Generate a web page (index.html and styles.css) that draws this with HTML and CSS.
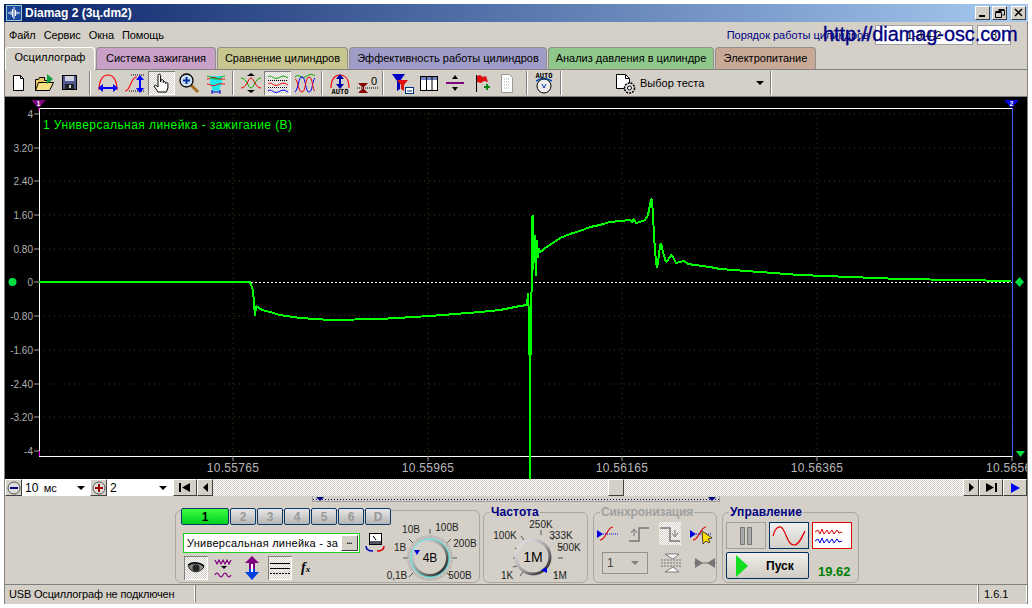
FILE: index.html

```html
<!DOCTYPE html>
<html lang="ru">
<head>
  <meta charset="UTF-8">
  <title>Diamag 2</title>
  <link rel="stylesheet" href="styles.css">
</head>
<body>
<div class="window">
  <div class="titlebar">
    <svg class="app-icon" width="16" height="16" viewBox="0 0 16 16"><rect width="16" height="16" fill="#1c4aa0"/><rect x=".5" y=".5" width="15" height="15" fill="none" stroke="#9cc"/><path d="M2 8h2M5 6v4M6.500 4v8M8 2v12M9.500 5v6M11 6.500v3M12 8h2" fill="none" stroke="#fff"/></svg>
    <span class="title-text">Diamag 2 (3ц.dm2)</span>
    <div class="win-btns">
      <button class="win-btn"><svg width="10" height="10"><rect x="1" y="7" width="6" height="2"/></svg></button>
      <button class="win-btn"><svg width="10" height="10"><path d="M3.500 2.500h6v4.500h-2M3.500 1.500h6M.5 4.500h6v5h-6zM.5 3.500h6" fill="none" stroke="#000"/></svg></button>
      <button class="win-btn close"><svg width="10" height="10"><path d="M1 1l7 7M8 1l-7 7" stroke="#000" stroke-width="1.500"/></svg></button>
    </div>
  </div>

  <div class="menubar">
    <span>Файл</span><span>Сервис</span><span>Окна</span><span>Помощь</span>
    <span class="order">Порядок работы цилиндров</span>
    <span class="order-box wide">1-3-4-2</span>
    <span class="order-box small">3</span>
    <span class="site-url">http://diamag-osc.com</span>
  </div>

  <div class="tabs">
    <div class="tab active">Осциллограф</div>
    <div class="tab pink">Система зажигания</div>
    <div class="tab olive">Сравнение цилиндров</div>
    <div class="tab violet">Эффективность работы цилиндров</div>
    <div class="tab green">Анализ давления в цилиндре</div>
    <div class="tab brown">Электропитание</div>
  </div>

  <div class="toolbar">
    <div class="tb"><svg width="24" height="24"><path d="M7.500 4.500h7l3 3v12h-10z" fill="#fff" stroke="#000"/><path d="M14.500 4.500v3h3" fill="none" stroke="#000"/></svg></div>
    <div class="tb"><svg width="24" height="24"><path d="M3.500 19.500v-11h3l1-2h5v3h5v2" fill="#e8c860" stroke="#000"/><path d="M3.500 19.500l3-8h15l-4 8z" fill="#f8e080" stroke="#000"/><path d="M15 3l6 5-6 5z" fill="#10a040"/></svg></div>
    <div class="tb"><svg width="24" height="24"><rect x="4.500" y="4.500" width="14" height="14" fill="#505a90" stroke="#000"/><rect x="7" y="5" width="9" height="5" fill="#d0d0e0"/><rect x="7" y="13" width="9" height="5" fill="#222"/><rect x="11" y="14" width="2" height="3" fill="#ccc"/></svg></div>
    <div class="sep gap-a"></div>
    <div class="tb wide"><svg width="24" height="24"><path d="M3 19c0-10 4-15 9-15s9 5 9 15" fill="none" stroke="#f00" stroke-width="1.200"/><path d="M4 17h16" stroke="#00f" stroke-width="2"/><path d="M2 17l5-4v8zM22 17l-5-4v8z" fill="#00f"/></svg></div>
    <div class="tb wide"><svg width="24" height="24"><path d="M2 20c6 0 5-14 12-14" fill="none" stroke="#f00" stroke-width="1.200"/><path d="M8 4h14M6 20h16" stroke="#000" stroke-dasharray="1 1"/><path d="M17 6v14" stroke="#00f" stroke-width="2"/><path d="M17 4l-4 5h8zM17 22l-4-5h8z" fill="#00f"/></svg></div>
    <div class="tb wide on"><svg width="24" height="24"><path d="M8 21l-4-6 1.500-1 2.500 2V4.500a1.300 1.300 0 0 1 2.600 0V11l.3-1.500a1.200 1.200 0 0 1 2.400.5V11.500a1.200 1.200 0 0 1 2.300 0v1a1.200 1.200 0 0 1 2.300 0V17l-1.500 4z" fill="#fff" stroke="#000"/></svg></div>
    <div class="tb wide"><svg width="24" height="24"><path d="M14 14l7 7" stroke="#a07020" stroke-width="3"/><circle cx="9.500" cy="9.500" r="6.500" fill="#cfe0f0" stroke="#000" stroke-width="1.300"/><path d="M6 9.500h7M9.500 6v7" stroke="#0030a0" stroke-width="2"/></svg></div>
    <div class="tb wide"><svg width="24" height="24"><path d="M6 5h12v8l-2 3v4H8v-4l-2-3z" fill="#20e8e8"/><path d="M3 8c4 0 4-3 9-1s5 1 9 1M3 13c4 0 4 3 9 1s5-1 9-1" fill="none" stroke="#e00"/><path d="M3 5c4 0 4 3 9 3s5-3 9-3" fill="none" stroke="#0a0"/><path d="M8 21h8M8 19v4M16 19v4" stroke="#00c"/></svg></div>
    <div class="sep gap-b"></div>
    <div class="tb wide"><svg width="24" height="24"><path d="M2 7c6 0 7 10 10 10s4-10 10-10" fill="none" stroke="#0a0"/><path d="M2 17c6 0 7-10 10-10s4 10 10 10" fill="none" stroke="#e00"/><path d="M8 5h8l-4-3zM8 19h8l-4 3z"/></svg></div>
    <div class="tb wide on"><svg width="24" height="24"><path d="M2 6c4-3 5 3 10 1s5-3 10 0" fill="none" stroke="#0a0"/><path d="M2 13c4-3 5 3 10 1s5-3 10 0" fill="none" stroke="#e00"/><path d="M2 20c4-3 5 3 10 1s5-3 10 0" fill="none" stroke="#00f"/><path d="M2 9.500h20M2 16.500h20" stroke="#000" stroke-dasharray="1 1"/></svg></div>
    <div class="tb wide"><svg width="24" height="24"><path d="M2 6c4-4 6 2 10 0s6-4 10-1" fill="none" stroke="#0a0"/><path d="M2 21c4-4 3-15 7-15s3 15 7 15 3-12 6-14" fill="none" stroke="#00f"/><path d="M2 8c3 0 3 13 7 13s3-15 7-15 3 13 6 14" fill="none" stroke="#e00"/></svg></div>
    <div class="sep gap-c"></div>
    <div class="tb wide"><svg width="24" height="24"><path d="M3 17c0-9 4-13 9-13s9 4 9 13" fill="none" stroke="#f00" stroke-width="1.200"/><path d="M12 6v10" stroke="#00a" stroke-width="2"/><path d="M12 3l-4 5h8zM12 18l-4-5h8z" fill="#00a"/><text x="12" y="23" class="mini" text-anchor="middle">AUTO</text></svg></div>
    <div class="tb wide"><svg width="24" height="24"><path d="M3 12l5 5 5-5zM3 22l5-5 5 5z" fill="#800"/><path d="M2 17h21" stroke="#000" stroke-dasharray="1 1"/><text x="19" y="14" class="zero" text-anchor="middle">0</text></svg></div>
    <div class="sep gap-d"></div>
    <div class="tb"><svg width="24" height="24"><path d="M1 3h13l-5 7v8l-3 2V10z" fill="#0000c0"/><path d="M6 9h11l-4 5v6l-3-2v-4z" fill="#e01010"/><rect x="14.500" y="16.500" width="8" height="6" fill="#fff" stroke="#003080"/><path d="M16 20h5" stroke="#003080"/></svg></div>
    <div class="tb"><svg width="24" height="24"><rect x="3.500" y="5.500" width="17" height="14" fill="#fff" stroke="#000"/><rect x="4" y="6" width="16" height="3" fill="#7080c0"/><path d="M9.500 5.500v14M15 5.500v14" stroke="#000"/></svg></div>
    <div class="tb"><svg width="24" height="24"><path d="M3 12h18" stroke="#800080" stroke-width="2"/><path d="M12 4l-3 4h6zM12 20l-3-4h6z" fill="#000"/></svg></div>
    <div class="tb"><svg width="24" height="24"><path d="M7.500 4v17" stroke="#000"/><path d="M8 5l3-1 3 2 3-1 2 6-4-1-3 2-4-1z" fill="#e01010"/><path d="M15 16h6M18 13v6" stroke="#0a8a20" stroke-width="2"/></svg></div>
    <div class="tb"><svg width="24" height="24"><path d="M6.500 3.500h8l3 3v15h-11z" fill="#fff" stroke="#999"/><path d="M9 8h6M9 11h6M9 14h6M9 17h6" stroke="#9a9" stroke-dasharray="1 1"/></svg></div>
    <div class="sep gap-e"></div>
    <div class="tb wide"><svg width="24" height="24"><text x="12" y="7" class="mini" text-anchor="middle">AUTO</text><path d="M4 10c5-3 11-3 16 0" fill="none" stroke="#0050c0" stroke-width="1.500"/><circle cx="12" cy="15" r="7" fill="#eee" stroke="#000"/><path d="M10 13l2 4 2-4" fill="none" stroke="#0030a0"/></svg></div>
    <div class="sep gap-f"></div>
    <div class="test-select">
      <svg width="24" height="24"><path d="M2.500 3.500h9l4 4v10h-13z" fill="#fff" stroke="#000"/><path d="M11.500 3.500v4h4" fill="none" stroke="#000"/><circle cx="15.500" cy="17" r="5" fill="#ddd" stroke="#000" stroke-dasharray="2 1" stroke-width="1.500"/><circle cx="15.500" cy="17" r="2" fill="#fff" stroke="#000"/></svg>
      <span class="test-label">Выбор теста</span>
      <span class="caret"></span>
    </div>
    <div class="sep gap-f"></div>
  </div>

  <svg class="plot" width="1022" height="382" viewBox="5 97 1022 382">
    <rect x="5" y="97" width="1022" height="382" fill="#000"/>
    <!-- сетка -->
    <g class="grid">
      <path d="M39 114H1012M39 148H1012M39 181H1012M39 215H1012M39 249H1012M39 316H1012M39 350H1012M39 384H1012M39 417H1012M39 451H1012"/>
      <path d="M233 108V456M428 108V456M622 108V456M817 108V456"/>
    </g>
    <path class="zero-line" d="M39 282.500H1012"/>
    <path class="frame" d="M39.500 456.500V108.500H1012.500V456.500ZM39 456.500H1012"/>
    <path class="frame-r" d="M1012.500 108V456"/>
    <path class="ticks" d="M34 114h5M34 148h5M34 181h5M34 215h5M34 249h5M34 282h5M34 316h5M34 350h5M34 384h5M34 417h5M34 451h5M233 456v5M428 456v5M622 456v5M817 456v5M1012 456v5"/>

    <g class="y-labels">
      <text x="33" y="118">4</text><text x="33" y="152">3.20</text><text x="33" y="185">2.40</text><text x="33" y="219">1.60</text><text x="33" y="253">0.80</text><text x="33" y="286">0</text><text x="33" y="320">-0.80</text><text x="33" y="354">-1.60</text><text x="33" y="388">-2.40</text><text x="33" y="421">-3.20</text><text x="33" y="455">-4</text>
    </g>
    <g class="x-labels">
      <text x="233" y="472">10.55765</text><text x="428" y="472">10.55965</text><text x="622" y="472">10.56165</text><text x="817" y="472">10.56365</text><text x="986" y="472" class="cut">10.5656</text>
    </g>
    <text class="plot-title" x="43" y="129">1 Универсальная линейка - зажигание (В)</text>

    <polyline class="trace" points="39,282 250,282 251,285 253,290 255,316 256,306 262,310 270,312 280,315 300,318 330,320 380,319 430,316 480,312 500,310 510,308 520,306 527,305 528,293 529,318 529,355"/>
    <polyline class="trace" points="531,355 531,300 532,285 532,216 533,216 533,270 534,257 535,235 536,276 537,240 538,258 539,248 540,252 542,251 545,248 550,245 560,238 570,234 580,231 590,227 600,225 610,222 620,221 630,220 632,222 634,219 636,223 640,222 645,220 648,215 650,205 651,199 652,200 653,215 654,235 655,250 656,262 657,268 658,262 660,246 661,243 663,252 666,262 668,260 671,255 673,257 676,263 680,262 684,261 688,264 695,265 710,267 720,269 760,272 800,275 850,277 900,279 960,280 1011,281"/>
    <path class="spike" d="M530 355V479"/>

    <path d="M31 100h15l-7.500 8z" fill="#800080"/><text class="mark" x="38.500" y="106">1</text>
    <path d="M39 108v3" stroke="#f0f"/>
    <path d="M1004 100h15l-7.500 8z" fill="#0000e0"/><text class="mark" x="1011.500" y="106">2</text>
    <path d="M39 451h1v5h-1z" fill="#f0f"/>
    <circle cx="12.500" cy="282" r="4" fill="#00e040"/>
    <path d="M1019.500 277l4.500 5-4.500 5-4.500-5z" fill="#00e040"/>
    <path d="M1016 451h9l-4.500 6z" fill="#00e040"/>
  </svg>

  <div class="scrollrow">
    <button class="round-btn"><svg width="14" height="14"><circle cx="7" cy="7" r="6" fill="#ddd" stroke="#555"/><path d="M3 7h8" stroke="#00007a" stroke-width="2"/></svg></button>
    <div class="combo time"><span>10 <small>мс</small></span><i class="caret"></i></div>
    <button class="round-btn"><svg width="14" height="14"><circle cx="7" cy="7" r="6" fill="#ddd" stroke="#555"/><path d="M3 7h8M7 3v8" stroke="#a00000" stroke-width="2"/></svg></button>
    <div class="combo count"><span>2</span><i class="caret"></i></div>
    <button class="sb-btn first"><svg width="12" height="9"><path d="M0 0h2v9H0zM3 4.500l8-4.500v9z"/></svg></button>
    <button class="sb-btn prev"><svg width="5" height="9"><path d="M5 0v9L0 4.500z"/></svg></button>
    <div class="track"><div class="thumb"></div></div>
    <button class="sb-btn next"><svg width="5" height="9"><path d="M0 0v9l5-4.500z"/></svg></button>
    <button class="sb-btn first"><svg width="12" height="9"><path d="M12 0h-2v9h2zM9 4.500L1 0v9z"/></svg></button>
    <button class="sb-btn first"><svg width="10" height="10"><path d="M1 0v10l9-5z" fill="#00f"/></svg></button>
  </div>

  <div class="splitter">
    <div class="split-bar"><i class="tri"></i><i class="tri"></i></div>
  </div>

  <div class="panel">
    <div class="group channels">
      <div class="ch-row">
        <button class="ch lit">1</button><button class="ch">2</button><button class="ch">3</button><button class="ch">4</button><button class="ch">5</button><button class="ch">6</button><button class="ch">D</button>
      </div>
      <div class="ch-body">
        <div class="ch-left">
          <div class="ch-line">
            <div class="ruler-select"><span>Универсальная линейка - за</span><button class="dots">•••</button></div>
            <svg width="20" height="20" viewBox="0 0 20 20"><rect x="4.500" y=".5" width="12" height="11" fill="#fff" stroke="#000"/><rect x="5" y="8" width="11" height="3" fill="#556"/><path d="M8 3l3 4" stroke="#000"/><path d="M1 13c0 4 3 5 7 5" fill="none" stroke="#0000c0" stroke-width="1.500"/><path d="M19 13c0 4-3 5-7 5" fill="none" stroke="#e00000" stroke-width="1.500"/></svg>
          </div>
          <div class="ch-tools">
            <div class="ct on"><svg width="20" height="14"><path d="M2 5c4-3 12-4 16 1-4 6-11 6-14 2z" fill="#888" stroke="#222"/><circle cx="10" cy="7" r="3.500" fill="#222"/><path d="M2 4c4-3 12-3 16 1" fill="none" stroke="#000" stroke-width="1.500"/></svg></div>
            <div class="ct"><svg width="22" height="22"><path d="M2 3l2 4 2-4 2 4 2-4 2 4 2-4 2 4 2-4" fill="none" stroke="#800080" stroke-width="1.200"/><path d="M8 9h6l-3 3z"/><path d="M2 18q2-4 4 0t4 0 4 0 4 0" fill="none" stroke="#800080" stroke-width="1.200"/></svg></div>
            <div class="ct"><svg width="16" height="24"><path d="M8 0l7 7h-4v6H5V7H1z" fill="#800080"/><path d="M8 24l7-8h-4v-3H5v3H1z" fill="#0040e0"/><path d="M7 8h2v8H7z" fill="#fff"/></svg></div>
            <div class="ct on"><svg width="20" height="14"><path d="M0 2.500h20M0 7.500h20" stroke="#000"/><path d="M0 12.500h20" stroke="#000" stroke-dasharray="2 1"/></svg></div>
            <span class="fx">f<small>x</small></span>
          </div>
        </div>
        <svg class="knob" width="94" height="66" viewBox="385 518 94 66">
          <path class="dial-ticks" d="M409 538l4 4M430 528v5M451 538l-4 4M403 557h5M457 557h-5M409 576l4-4M451 576l-4-4"/>
          <circle class="dial-hatch" cx="430" cy="557" r="21.500"/>
          <circle cx="430" cy="557" r="17.500" fill="#d4d0c8" stroke="url(#ringA)" stroke-width="3"/>
          <circle cx="430" cy="557" r="19" fill="none" stroke="#40e0e0"/>
          <path d="M414 549h6l-3 5z" fill="#0000e0"/>
          <text class="knob-val" x="430" y="561">4В</text>
          <text class="dial" x="411" y="532">10В</text><text class="dial" x="447" y="530">100В</text><text class="dial" x="400" y="550">1В</text><text class="dial" x="465" y="546">200В</text><text class="dial" x="397" y="578">0,1В</text><text class="dial" x="460" y="578">500В</text>
          <defs><linearGradient id="ringA" x1="0" y1="0" x2="1" y2="1"><stop offset="0" stop-color="#eee"/><stop offset=".5" stop-color="#999"/><stop offset="1" stop-color="#111"/></linearGradient></defs>
        </svg>
      </div>
    </div>

    <div class="group freq">
      <div class="legend">Частота</div>
      <svg class="knob" width="104" height="66" viewBox="484 518 104 66">
        <path class="dial-ticks" d="M541 529v5M521 535l3 4M552 539l3-4M515 547l4 2M559 547l4-2M513 557h5M563 557h-5M513 566l4-1M520 575l3-4M554 571l3 4"/>
        <circle cx="533" cy="556" r="17" fill="#d4d0c8" stroke="url(#ringB)" stroke-width="3"/>
        <path d="M541 569l6-3v6z" fill="#0000e0"/>
        <text class="knob-big" x="533" y="561">1М</text>
        <text class="dial" x="541" y="527">250K</text><text class="dial" x="505" y="538">100K</text><text class="dial" x="561" y="538">333K</text><text class="dial" x="569" y="550">500K</text><text class="dial" x="507" y="578">1K</text><text class="dial" x="560" y="578">1М</text>
        <defs><linearGradient id="ringB" x1="0" y1="0" x2="1" y2="1"><stop offset="0" stop-color="#eee"/><stop offset=".5" stop-color="#aaa"/><stop offset="1" stop-color="#111"/></linearGradient></defs>
      </svg>
    </div>

    <div class="group sync">
      <div class="legend muted">Синхронизация</div>
      <div class="sync-row">
        <div class="st"><svg width="22" height="20"><path d="M3 16c6 0 7-13 13-13" fill="none" stroke="#e00000" stroke-width="1.200"/><path d="M0 6l6 4-6 4z" fill="#0000e0"/><path d="M6 10h15" stroke="#0000e0" stroke-dasharray="1 1"/></svg></div>
        <div class="st"><svg width="22" height="20"><path d="M1 17h10V4h10" fill="none" stroke="#777" stroke-width="1.500"/><path d="M6 12V6M3 9l3-4 3 4" fill="none" stroke="#777"/></svg></div>
        <div class="st on"><svg width="22" height="20"><path d="M1 4h10v13h10" fill="none" stroke="#777" stroke-width="1.500"/><path d="M16 6v6M13 9l3 4 3-4" fill="none" stroke="#777"/></svg></div>
        <div class="st"><svg width="24" height="20"><path d="M3 16c6 0 7-13 13-13" fill="none" stroke="#e00000" stroke-width="1.200"/><path d="M0 6l6 4-6 4z" fill="#0000e0"/><path d="M6 10h15" stroke="#0000e0" stroke-dasharray="1 1"/><path d="M12 7l1 13 3-3 3 2 1-1-2-3 4-1z" fill="#ffe000" stroke="#000" stroke-width=".7"/></svg></div>
      </div>
      <div class="sync-row second">
        <div class="sync-combo"><span>1</span><i class="caret grey"></i></div>
        <svg width="22" height="20"><path d="M1 7h20M1 10h20M1 13h20" stroke="#777" stroke-dasharray="2 1"/><path d="M5 1h14l-6 5zM5 19h14l-6-5z" fill="#fff" stroke="#777"/></svg>
        <svg width="22" height="12"><path d="M1 1l8 5-8 5zM21 1l-8 5 8 5z" fill="#777"/><path d="M0 6h22" stroke="#777"/></svg>
      </div>
    </div>

    <div class="group manage">
      <div class="legend">Управление</div>
      <div class="mg-row">
        <button class="mg pause"><svg width="14" height="20"><path d="M1.500 1.500h4v17h-4zM8.500 1.500h4v17h-4z" fill="#aaa" stroke="#777"/></svg></button>
        <button class="mg sine"><svg width="34" height="20"><path d="M1 10c3-11 8-11 11-5 4 8 5 14 10 14s8-8 11-14" fill="none" stroke="#e00000" stroke-width="1.200"/></svg></button>
        <button class="mg dual"><svg width="36" height="20"><path d="M1 6l3-2 2 4 2-5 2 5 3-4 2 4 3-4 2 4 3-4 2 3 3-1" fill="none" stroke="#e00000"/><path d="M1 15l3-2 2 4 2-5 2 5 3-4 2 4 3-4 2 4 3-4 2 3 3-1" fill="none" stroke="#0000e0"/></svg></button>
      </div>
      <div class="mg-row">
        <button class="start"><svg width="12" height="22"><path d="M0 0l12 11-12 11z" fill="#10e020"/></svg><b>Пуск</b></button>
        <span class="rate">19.62</span>
      </div>
    </div>
  </div>

  <div class="statusbar">
    <div class="st-cell main">USB Осциллограф не подключен</div>
    <div class="st-cell fill"></div>
    <div class="st-cell ver">1.6.1</div>
  </div>
</div>
</body>
</html>
```

FILE: styles.css

```css
* { box-sizing: border-box; }
body {
  margin: 0;
  background: #fff;
  font-family: "Liberation Sans", Arial, sans-serif;
  font-size: 11px;
  color: #000;
}
svg { display: block; flex: none; }
button { font-family: inherit; padding: 0; }

.window {
  position: relative;
  width: 1024px;
  height: 600px;
  margin: 4px;
  background: #d4d0c8;
  border-left: 1px solid #808080;
  border-right: 1px solid #808080;
}

/* заголовок */
.titlebar {
  display: flex;
  align-items: center;
  height: 18px;
  margin-left: -1px;
  margin-right: -1px;
  padding: 0 2px;
  background: linear-gradient(90deg, #0a246a, #a6caf0);
  color: #fff;
}
.app-icon { margin-right: 3px; }
.title-text { font-weight: bold; font-size: 12px; }
.win-btns { display: flex; margin-left: auto; gap: 2px; }
.win-btn {
  display: flex;
  align-items: center;
  justify-content: center;
  width: 15px;
  height: 14px;
  background: #d4d0c8;
  border: 1px solid;
  border-color: #fff #404040 #404040 #fff;
}
.win-btn.close { margin-left: 2px; }

.menubar {
  position: relative;
  display: flex;
  align-items: center;
  gap: 8px;
  height: 25px;
  padding-left: 4px;
  padding-top: 1px;
  letter-spacing: -.1px;
}
.order { margin-left: auto; margin-right: -2px; color: #000080; letter-spacing: 0; }
.order-box {
  width: 98px;
  height: 20px;
  background: #fff;
  border: 1px solid #a0a0a0;
  text-align: center;
  line-height: 18px;
}
.order-box.small { width: 34px; margin-left: -4px; margin-right: 16px; }
.site-url {
  position: absolute;
  left: 818px;
  top: 0;
  font-size: 20px;
  line-height: 24px;
  letter-spacing: -.1px;
  color: #000080;
  -webkit-text-stroke: .3px #000080;
}

/* вкладки */
.tabs {
  display: flex;
  height: 22px;
  padding-left: 1px;
  gap: 1px;
}
.tab {
  height: 22px;
  padding-top: 4px;
  border: 1px solid #909090;
  border-bottom: none;
  border-radius: 4px 4px 0 0;
  text-align: center;
  white-space: nowrap;
}
.tab.active { width: 90px; background: #d4d0c8; border-color: #fff; margin-left: -1px; padding-top: 3px; height: 23px; position: relative; z-index: 1; }
.tab.pink { width: 120px; background: #c8a0c8; }
.tab.olive { width: 131px; background: #c8c690; }
.tab.violet { width: 198px; background: #a09cc8; }
.tab.green { width: 166px; background: #90c88c; }
.tab.brown { width: 101px; background: #c8a896; }

.toolbar {
  display: flex;
  align-items: center;
  height: 28px;
  border-top: 1px solid #808080;
  border-bottom: 1px solid #808080;
}
.tb {
  display: flex;
  align-items: center;
  justify-content: center;
  width: 26px;
  height: 24px;
}
.tb.wide { width: 27px; }
.tb.on, .ct.on, .st.on {
  background: repeating-conic-gradient(#fff 0 25%, #d4d0c8 0 50%) 0 0 / 2px 2px;
  box-shadow: inset 1px 1px #808080, inset -1px -1px #fff;
}
.sep {
  width: 2px;
  height: 24px;
  border-left: 1px solid #808080;
  border-right: 1px solid #fff;
}
.gap-a { margin: 0 3px 0 6px; }
.gap-b { margin: 0 3px; }
.gap-c { margin: 0 3px; }
.gap-d { margin: 0 6px 0 2px; }
.gap-e { margin: 0 2px 0 6px; }
.gap-f { margin: 0 0 0 3px; }
.test-select + .gap-f { margin-left: 0; }
.mini { font-size: 7px; font-weight: bold; font-family: "DejaVu Sans Mono", monospace; }
.zero { font-size: 11px; }

.test-select {
  display: flex;
  align-items: center;
  width: 208px;
  padding-left: 52px;
}
.test-label { margin-left: 2px; }
.caret {
  display: block;
  width: 0;
  height: 0;
  border-left: 4px solid transparent;
  border-right: 4px solid transparent;
  border-top: 4px solid #000;
}
.test-select .caret { margin-left: auto; margin-right: 6px; }

/* осциллограмма */
.grid path { stroke: #3c3c14; stroke-dasharray: 1 4; fill: none; }
.zero-line { stroke: #fff; stroke-dasharray: 2 2; fill: none; }
.frame { stroke: #fff; fill: none; }
.frame-r { stroke: #4060ff; }
.ticks { stroke: #a0a0a0; fill: none; }
.y-labels text { fill: #b0b0b0; font-size: 10px; text-anchor: end; }
.x-labels text { fill: #b8b8b8; font-size: 12px; text-anchor: middle; letter-spacing: .3px; }
.x-labels text.cut { text-anchor: start; }
.plot-title { fill: #00ff00; font-size: 12px; letter-spacing: .43px; }
.trace { fill: none; stroke: #00ff00; stroke-width: 2; stroke-linejoin: bevel; shape-rendering: crispEdges; }
.spike { stroke: #00ff00; stroke-width: 2; fill: none; }
.mark { fill: #fff; font-size: 7px; font-weight: bold; text-anchor: middle; }

/* строка прокрутки */
.scrollrow {
  display: flex;
  height: 17px;
  background: #fff;
}
.round-btn, .sb-btn {
  display: flex;
  align-items: center;
  justify-content: center;
  height: 17px;
  background: #d4d0c8;
  border: 1px solid;
  border-color: #fff #404040 #404040 #fff;
}
.round-btn { width: 17px; }
.combo {
  display: flex;
  align-items: center;
  justify-content: space-between;
  padding: 0 5px 0 3px;
  background: #fff;
  font-size: 12px;
}
.combo small { font-size: 11px; margin-left: 2px; }
.combo.time { width: 68px; }
.combo.count { width: 65px; margin-right: 1px; }
.sb-btn.first { width: 24px; }
.sb-btn.prev, .sb-btn.next { width: 16px; }
.track {
  position: relative;
  flex: 1;
  background: repeating-conic-gradient(#fff 0 25%, #d4d0c8 0 50%) 0 0 / 2px 2px;
}
.thumb {
  position: absolute;
  left: 395px;
  top: 0;
  width: 16px;
  height: 17px;
  background: #d4d0c8;
  border: 1px solid;
  border-color: #fff #404040 #404040 #fff;
}

.splitter { height: 7px; padding-left: 307px; }
.split-bar {
  display: flex;
  align-items: center;
  justify-content: space-between;
  width: 408px;
  height: 6px;
  padding: 0 3px;
  border: 1px solid #a0a0a0;
  border-top: none;
  background: linear-gradient(90deg, #00007a 1px, transparent 1px) 0 3px / 3px 1px repeat-x;
}
.tri {
  display: block;
  width: 0;
  height: 0;
  border-left: 4px solid transparent;
  border-right: 4px solid transparent;
  border-top: 4px solid #00007a;
}

/* нижняя панель */
.panel {
  display: flex;
  align-items: flex-end;
  height: 80px;
  padding-left: 170px;
}
.group {
  height: 71px;
  border: 1px solid #a8a8a0;
  border-radius: 6px;
}
.legend {
  width: fit-content;
  margin: -8px 0 0 6px;
  padding: 0 1px;
  background: #d4d0c8;
  font-size: 12px;
  font-weight: bold;
  line-height: 14px;
  color: #000080;
  letter-spacing: .1px;
}
.legend.muted { color: #a0a0a0; letter-spacing: -.1px; }

.channels { width: 305px; height: 73px; margin-right: 3px; }
.ch-row { display: flex; gap: 1px; margin: -3px 0 0 5px; }
.ch {
  width: 26px;
  height: 17px;
  background: linear-gradient(#e8e8e8, #b4b4b4);
  border: 1px solid #0a3a6a;
  border-radius: 2px;
  font-size: 12px;
  font-weight: bold;
  color: #999;
}
.ch.lit { width: 48px; background: linear-gradient(#40ff40, #00d020); color: #000; }
.ch-body { display: flex; justify-content: space-between; }
.ch-left { padding: 8px 0 0 7px; }
.ch-line { display: flex; align-items: center; gap: 5px; }
.ruler-select {
  display: flex;
  align-items: center;
  justify-content: space-between;
  width: 177px;
  height: 20px;
  padding: 0 1px 0 3px;
  background: #fff;
  border: 1px solid #20d020;
  letter-spacing: .25px;
}
.dots {
  width: 17px;
  height: 16px;
  background: #d4d0c8;
  border: 1px solid;
  border-color: #fff #404040 #404040 #fff;
  font-size: 5px;
}
.ch-tools { display: flex; align-items: center; height: 24px; margin-top: 3px; padding-left: 1px; }
.ct { display: flex; align-items: center; justify-content: center; width: 24px; height: 24px; margin-right: 4px; }
.fx { font-family: "Liberation Serif", serif; font-style: italic; font-weight: bold; font-size: 14px; margin-left: 5px; }
.fx small { font-size: 9px; }
.knob { margin: -6px 0 0 0; }
.dial { font-size: 10px; text-anchor: middle; fill: #222; }
.knob-val { font-size: 12px; text-anchor: middle; }
.knob-big { font-size: 14px; text-anchor: middle; }
.dial-ticks { stroke: #555; fill: none; }
.dial-hatch { fill: none; stroke: #aaa; stroke-width: 3; stroke-dasharray: 1 1; }

.freq { width: 105px; margin-right: 5px; }
.freq .knob { margin: 0; }
.sync { width: 124px; margin-right: 5px; }
.sync-row { display: flex; align-items: center; padding: 3px 0 0 3px; }
.st { display: flex; align-items: center; justify-content: center; width: 23px; height: 23px; margin-right: 9px; }
.st.on { box-shadow: none; }
.sync-row.second { padding: 7px 0 0 8px; gap: 12px; }
.sync-combo {
  display: flex;
  align-items: center;
  justify-content: space-between;
  width: 47px;
  height: 22px;
  padding: 0 8px 0 4px;
  border: 1px solid #909090;
  font-size: 12px;
  color: #444;
}
.caret.grey { border-top-color: #808080; }

.manage { width: 137px; }
.mg-row { display: flex; align-items: center; gap: 3px; padding: 3px 0 0 3px; }
.mg {
  display: flex;
  align-items: center;
  justify-content: center;
  width: 40px;
  height: 27px;
  background: #d4d0c8;
}
.pause { border: 1px solid #a0a0a0; }
.sine { border: 1px solid #003060; background: linear-gradient(#f0f0f0, #d4d0c8); }
.dual { border: 1px solid #e00000; background: #fff; }
.start {
  display: flex;
  align-items: center;
  width: 83px;
  height: 27px;
  padding-left: 9px;
  background: linear-gradient(#f0f0ea, #cfcbc3);
  border: 1px solid #003060;
  border-radius: 2px;
  font-size: 12px;
}
.start b { margin-left: 18px; }
.rate { align-self: flex-end; margin-left: 6px; font-size: 13px; font-weight: bold; color: #008000; }

/* строка состояния */
.statusbar {
  display: flex;
  height: 18px;
  margin-top: 1px;
  border-top: 1px solid #808080;
}
.st-cell { padding: 2px 4px; border-right: 1px solid #fff; line-height: 14px; }
.st-cell.main { width: 190px; letter-spacing: -.18px; }
.st-cell.fill { flex: 1; border-left: 1px solid #808080; }
.st-cell.ver { width: 49px; padding-left: 5px; border-left: 1px solid #808080; }
```
